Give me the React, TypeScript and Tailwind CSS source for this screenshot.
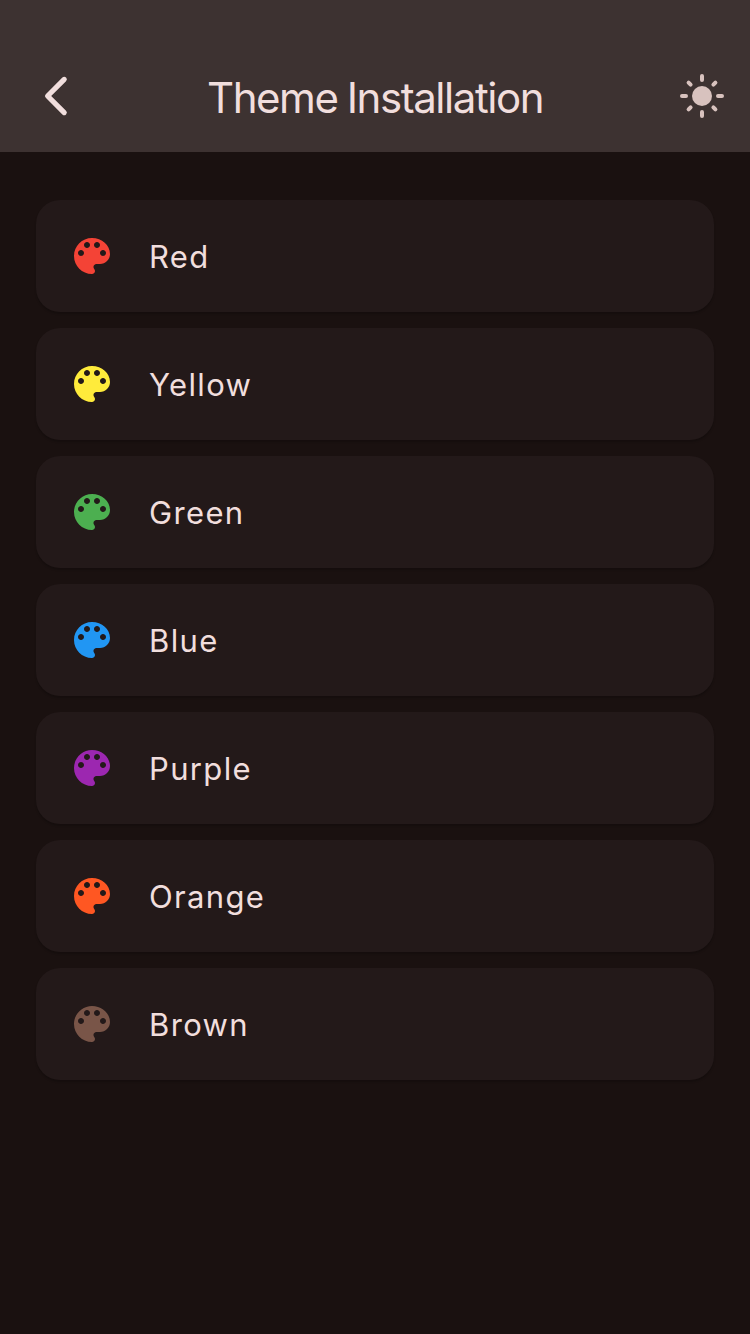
const themes = [
  { name: 'Red', color: 'text-[#f44336]' },
  { name: 'Yellow', color: 'text-[#ffeb3b]' },
  { name: 'Green', color: 'text-[#4caf50]' },
  { name: 'Blue', color: 'text-[#2196f3]' },
  { name: 'Purple', color: 'text-[#9c27b0]' },
  { name: 'Orange', color: 'text-[#ff5722]' },
  { name: 'Brown', color: 'text-[#795548]' },
];

function Palette({ color }: { color: string }) {
  return (
    <svg viewBox="0 0 24 24" className={`size-12 ${color}`} fill="currentColor" aria-hidden="true">
      <path d="M12 3c-4.97 0-9 4.03-9 9s4.03 9 9 9c.83 0 1.5-.67 1.5-1.5 0-.39-.15-.74-.39-1.01-.23-.26-.38-.61-.38-.99 0-.83.67-1.5 1.5-1.5H16c2.76 0 5-2.24 5-5 0-4.42-4.03-8-9-8zm-5.5 9c-.83 0-1.5-.67-1.5-1.5S5.67 9 6.5 9 8 9.67 8 10.5 7.33 12 6.5 12zm3-4C8.67 8 8 7.33 8 6.5S8.67 5 9.5 5s1.5.67 1.5 1.5S10.33 8 9.5 8zm5 0c-.83 0-1.5-.67-1.5-1.5S13.67 5 14.5 5s1.5.67 1.5 1.5S15.33 8 14.5 8zm3 4c-.83 0-1.5-.67-1.5-1.5S16.67 9 17.5 9s1.5.67 1.5 1.5-.67 1.5-1.5 1.5z" />
    </svg>
  );
}

export default function App() {
  return (
    <div className="flex h-[1334px] w-[750px] flex-col bg-[#1a1110] font-['Inter',sans-serif] text-[#f1dedd]">
      <header className="flex h-[152px] items-end justify-between bg-[#3d3231] px-6">
        <button aria-label="Back" className="flex h-28 w-14 items-center pl-2">
          <svg viewBox="0 0 48 48" className="size-12 shrink-0" fill="none" stroke="currentColor" strokeWidth="5.2" aria-hidden="true">
            <path d="M32.2 7.4 15.6 24l16.6 16.6" strokeLinecap="round" strokeLinejoin="round" />
          </svg>
        </button>
        <h1 className="flex h-28 items-center pt-0.5 text-[42px] tracking-[-1.45px] [word-spacing:-1px]">Theme Installation</h1>
        <button aria-label="Toggle brightness" className="flex h-28 w-14 items-center justify-end text-[#d8c2be]">
          <svg viewBox="0 0 24 24" className="size-12" fill="currentColor" aria-hidden="true">
            <circle cx="12" cy="12" r="5" />
            <path d="M2 12h2m16 0h2M12 2v2m0 16v2M5.3 5.3l1 1m11.4 11.4 1 1m0-13.4-1 1M6.3 17.7l-1 1" stroke="currentColor" strokeWidth="2" strokeLinecap="round" />
          </svg>
        </button>
      </header>
      <main className="flex flex-col gap-4 px-9 pt-12">
        {themes.map(({ name, color }) => (
          <button key={name} className="flex h-28 items-center rounded-3xl bg-[#231919] pl-8 text-left shadow-[0_2px_2px_rgba(0,0,0,0.2)]">
            <Palette color={color} />
            <span className="ml-[33px] pt-[3px] text-[31px] tracking-[1.35px]">{name}</span>
          </button>
        ))}
      </main>
    </div>
  );
}
